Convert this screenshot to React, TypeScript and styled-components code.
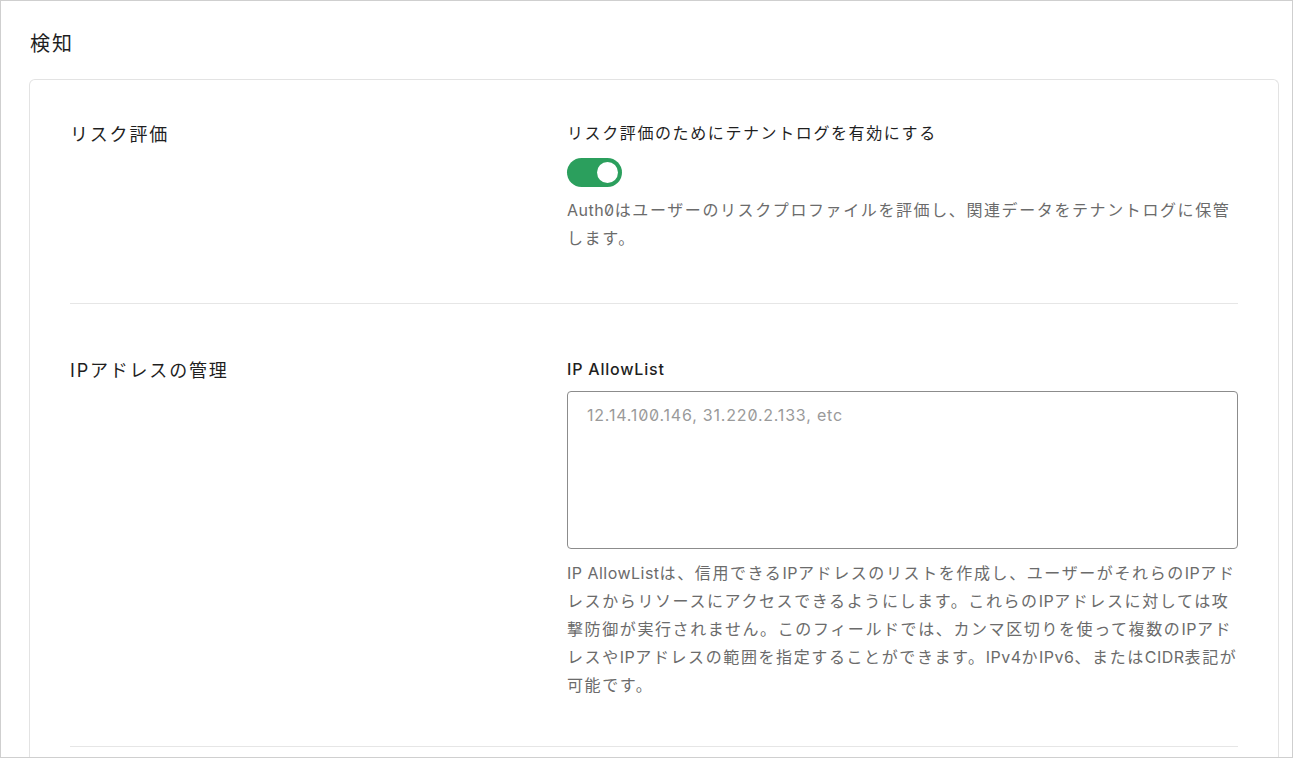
import React from "react";
import styled, { createGlobalStyle } from "styled-components";

const Global = createGlobalStyle`
  html, body { margin: 0; padding: 0; background: #ffffff; }
  body {
    font-family: Inter, "Noto Sans CJK JP", sans-serif;
    color: #1f1f1f;
    -webkit-font-smoothing: antialiased;
  }
  * { box-sizing: border-box; }
`;

const Frame = styled.div`
  width: 1293px;
  height: 758px;
  border: 1px solid #cfcfcf;
  overflow: hidden;
  padding: 0 13px 0 28px;
  display: flex;
  flex-direction: column;
`;

const PageTitle = styled.h1`
  margin: 0;
  padding: 29px 0 0 1px;
  height: 78px;
  font-size: 20px;
  line-height: 28px;
  font-weight: 400;
  letter-spacing: 0.1em;
  color: #1f1f1f;
`;

const Card = styled.section`
  border: 1px solid #e3e3e3;
  border-bottom: none;
  border-radius: 6px 6px 0 0;
  padding: 0 40px;
  flex: 1;
`;

const Row = styled.div<{ $first?: boolean }>`
  display: grid;
  grid-template-columns: 497px 1fr;
  padding: ${(p) => (p.$first ? "41px" : "53px")} 0 ${(p) => (p.$first ? "51px" : "47px")};
  border-bottom: 1px solid #e6e6e6;
`;

const Label = styled.h2`
  margin: 0;
  font-size: 18px;
  line-height: 28px;
  font-weight: 400;
  letter-spacing: 0.1em;
  color: #1f1f1f;
`;

const Field = styled.div`
  display: flex;
  flex-direction: column;
  align-items: flex-start;
`;

const FieldTitle = styled.div<{ $strong?: boolean }>`
  font-size: 16px;
  line-height: 24px;
  font-weight: ${(p) => (p.$strong ? 500 : 400)};
  letter-spacing: ${(p) => (p.$strong ? "0.05em" : "0.1em")};
  color: #1f1f1f;
`;

const Toggle = styled.button<{ $on: boolean }>`
  margin-top: 13px;
  width: 55px;
  height: 29px;
  border: none;
  border-radius: 15px;
  padding: 0 4px;
  background: ${(p) => (p.$on ? "#2b9f5d" : "#bdbdbd")};
  display: flex;
  align-items: center;
  justify-content: ${(p) => (p.$on ? "flex-end" : "flex-start")};
  cursor: pointer;
`;

const Knob = styled.span`
  width: 21px;
  height: 21px;
  border-radius: 50%;
  background: #ffffff;
`;

const Help = styled.p<{ $gap: number }>`
  margin: ${(p) => p.$gap}px 0 0;
  font-size: 16px;
  line-height: 28px;
  letter-spacing: 0.1em;
  color: #6b6b6b;
  font-feature-settings: "zero";
  width: 100%;
`;

const Latin = styled.span`
  letter-spacing: 0.03em;
`;

const TextArea = styled.textarea`
  margin-top: 10px;
  width: 100%;
  height: 158px;
  border: 1px solid #8c8c8c;
  border-radius: 4px;
  padding: 11px 19px;
  font-family: Inter, "Noto Sans CJK JP", sans-serif;
  font-size: 16px;
  line-height: 24px;
  letter-spacing: 0.05em;
  color: #1f1f1f;
  resize: none;
  outline: none;
  font-feature-settings: "zero";
  &::placeholder { color: #9a9a9a; }
`;

export default function App() {
  return (
    <>
      <Global />
      <Frame>
        <PageTitle>検知</PageTitle>
        <Card>
          <Row $first>
            <Label>リスク評価</Label>
            <Field>
              <FieldTitle>リスク評価のためにテナントログを有効にする</FieldTitle>
              <Toggle $on aria-label="toggle">
                <Knob />
              </Toggle>
              <Help $gap={9}>
                <Latin>Auth0</Latin>はユーザーのリスクプロファイルを評価し、関連データをテナントログに保管します。
              </Help>
            </Field>
          </Row>
          <Row>
            <Label>IPアドレスの管理</Label>
            <Field>
              <FieldTitle $strong>IP AllowList</FieldTitle>
              <TextArea placeholder="12.14.100.146, 31.220.2.133, etc" />
              <Help $gap={10}>
                <Latin>IP AllowList</Latin>は、信用できる<Latin>IP</Latin>アドレスのリストを作成し、ユーザーがそれらの<Latin>IP</Latin>アドレスからリソースにアクセスできるようにします。これらの<Latin>IP</Latin>アドレスに対しては攻撃防御が実行されません。このフィールドでは、カンマ区切りを使って複数の<Latin>IP</Latin>アドレスや<Latin>IP</Latin>アドレスの範囲を指定することができます。<Latin>IPv4</Latin>か<Latin>IPv6</Latin>、または<Latin>CIDR</Latin>表記が可能です。
              </Help>
            </Field>
          </Row>
        </Card>
      </Frame>
    </>
  );
}
